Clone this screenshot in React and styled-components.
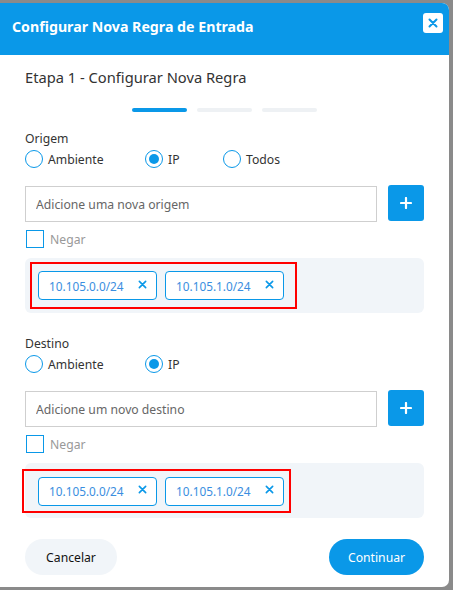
import React from 'react';
import styled, { createGlobalStyle } from 'styled-components';

const GlobalStyle = createGlobalStyle`
  html, body {
    margin: 0;
    padding: 0;
    background: #8a8a8a;
    font-family: 'Noto Sans', 'Open Sans', sans-serif;
  }
  * { box-sizing: border-box; }
`;

const Backdrop = styled.div`
  width: 453px;
  height: 590px;
  padding: 3px 4px 0 0;
  background: #8a8a8a;
  overflow: hidden;
`;

const Modal = styled.div`
  width: 449px;
  height: 584px;
  background: #fff;
  border-radius: 0 7px 7px 0;
  overflow: hidden;
  display: flex;
  flex-direction: column;
`;

const Header = styled.div`
  height: 52px;
  background: #0a98e8;
  display: flex;
  align-items: flex-start;
  justify-content: space-between;
  padding: 10px 6px 0 12px;
`;

const Title = styled.h1`
  margin: 0;
  color: #fff;
  font-size: 14.2px;
  line-height: 28px;
  font-weight: 700;
`;

const CloseButton = styled.button`
  width: 20px;
  height: 20px;
  border: none;
  border-radius: 3px;
  background: #fff;
  display: flex;
  align-items: center;
  justify-content: center;
  padding: 0;
`;

const Body = styled.div`
  padding: 12px 25px 0 25px;
  display: flex;
  flex-direction: column;
`;

const StepTitle = styled.h2`
  margin: 0;
  font-size: 14.7px;
  font-weight: 400;
  color: #333;
  line-height: 20px;
`;

const Steps = styled.div`
  display: flex;
  justify-content: center;
  gap: 10px;
  margin: 21px 0 18px;
`;

const StepBar = styled.div`
  width: 55px;
  height: 4px;
  border-radius: 2px;
  background: ${p => (p.$active ? '#0a98e8' : '#eef1f4')};
`;

const Section = styled.div`
  display: flex;
  flex-direction: column;
  margin-top: ${p => p.$gap}px;
`;

const Label = styled.div`
  font-size: 12.2px;
  color: #333;
  line-height: 17px;
`;

const RadioRow = styled.div`
  display: flex;
  align-items: center;
  margin-top: 2px;
  height: 20px;
`;

const RadioOption = styled.label`
  display: flex;
  align-items: center;
  gap: 5px;
  width: ${p => p.$width}px;
  font-size: 12.2px;
  color: #333;
`;

const RadioCircle = styled.span`
  width: 18px;
  height: 18px;
  border-radius: 50%;
  border: 1px solid #0a98e8;
  display: flex;
  align-items: center;
  justify-content: center;
  flex-shrink: 0;

  &::after {
    content: '';
    width: 10px;
    height: 10px;
    border-radius: 50%;
    background: ${p => (p.$checked ? '#0a98e8' : 'transparent')};
  }
`;

const InputRow = styled.div`
  display: flex;
  align-items: center;
  gap: 11px;
  margin-top: 17px;
`;

const TextInput = styled.input`
  flex: 1;
  height: 36px;
  border: 1px solid #cfcfcf;
  padding: 0 10px;
  font-family: inherit;
  font-size: 12.2px;
  color: #333;
  outline: none;

  &::placeholder {
    color: #666;
  }
`;

const AddButton = styled.button`
  width: 36px;
  height: 36px;
  border: none;
  border-radius: 3px;
  background: #0a98e8;
  display: flex;
  align-items: center;
  justify-content: center;
  padding: 0;
  margin-top: -2px;
`;

const CheckRow = styled.label`
  display: flex;
  align-items: center;
  gap: 6px;
  margin-top: 8px;
  margin-left: 1px;
  font-size: 12.2px;
  color: #999;
`;

const CheckBox = styled.span`
  width: 18px;
  height: 18px;
  border: 1px solid #0a98e8;
`;

const ChipArea = styled.div`
  margin-top: 10px;
  height: 55px;
  border-radius: 6px;
  background: #f1f5f9;
  display: flex;
  align-items: center;
`;

const Highlight = styled.div`
  border: 2px solid #f00;
  display: flex;
  align-items: center;
  gap: 8px;
  margin-left: ${p => p.$inset}px;
  padding: ${p => p.$padTop}px ${p => p.$padRight}px ${p => p.$padBottom}px ${p => p.$padLeft}px;
`;

const Chip = styled.div`
  width: 119px;
  height: 29px;
  border: 1px solid #0a98e8;
  border-radius: 4px;
  background: #fff;
  display: flex;
  align-items: center;
  justify-content: space-between;
  padding: 0 9px 0 10px;
  font-size: 11.8px;
  color: #3a8ee0;
`;

const ChipClose = styled.span`
  display: flex;
  align-items: center;
  margin-top: -3px;
`;

const Footer = styled.div`
  display: flex;
  justify-content: space-between;
  align-items: center;
  margin-top: 21px;
`;

const PillButton = styled.button`
  width: ${p => p.$width}px;
  height: 36px;
  border: none;
  border-radius: 18px;
  padding: 0;
  font-family: inherit;
  font-size: 12.2px;
  background: ${p => (p.$primary ? '#0a98e8' : '#f1f5f9')};
  color: ${p => (p.$primary ? '#fff' : '#111')};
`;

const Cross = ({ size = 10, stroke = 2 }) => (
  <svg width={size} height={size} viewBox="0 0 10 10">
    <path d="M1.5 1.5 L8.5 8.5 M8.5 1.5 L1.5 8.5" stroke="#0a98e8" strokeWidth={stroke} strokeLinecap="round" />
  </svg>
);

const Plus = () => (
  <svg width="12" height="12" viewBox="0 0 12 12">
    <path d="M6 1 V11 M1 6 H11" stroke="#fff" strokeWidth="2.2" strokeLinecap="round" />
  </svg>
);

const chips = ['10.105.0.0/24', '10.105.1.0/24'];

const RuleSection = ({ label, options, placeholder, gap, frame }) => (
  <Section $gap={gap}>
    <Label>{label}</Label>
    <RadioRow>
      {options.map(o => (
        <RadioOption key={o.name} $width={o.width}>
          <RadioCircle $checked={o.checked} />
          {o.name}
        </RadioOption>
      ))}
    </RadioRow>
    <InputRow>
      <TextInput placeholder={placeholder} />
      <AddButton>
        <Plus />
      </AddButton>
    </InputRow>
    <CheckRow>
      <CheckBox />
      Negar
    </CheckRow>
    <ChipArea>
      <Highlight {...frame}>
        {chips.map(c => (
          <Chip key={c}>
            {c}
            <ChipClose>
              <Cross size={9} stroke={1.8} />
            </ChipClose>
          </Chip>
        ))}
      </Highlight>
    </ChipArea>
  </Section>
);

export default function App() {
  return (
    <>
      <GlobalStyle />
      <Backdrop>
        <Modal>
          <Header>
            <Title>Configurar Nova Regra de Entrada</Title>
            <CloseButton>
              <Cross size={10} stroke={2} />
            </CloseButton>
          </Header>
          <Body>
            <StepTitle>Etapa 1 - Configurar Nova Regra</StepTitle>
            <Steps>
              <StepBar $active />
              <StepBar />
              <StepBar />
            </Steps>
            <RuleSection
              gap={0}
              label="Origem"
              placeholder="Adicione uma nova origem"
              options={[
                { name: 'Ambiente', width: 120 },
                { name: 'IP', width: 78, checked: true },
                { name: 'Todos', width: 80 },
              ]}
              frame={{ $inset: 5, $padLeft: 6, $padRight: 11, $padTop: 7, $padBottom: 7 }}
            />
            <RuleSection
              gap={22}
              label="Destino"
              placeholder="Adicione um novo destino"
              options={[
                { name: 'Ambiente', width: 120 },
                { name: 'IP', width: 78, checked: true },
              ]}
              frame={{ $inset: -3, $padLeft: 14, $padRight: 5, $padTop: 6, $padBottom: 5 }}
            />
            <Footer>
              <PillButton $width={92}>Cancelar</PillButton>
              <PillButton $primary $width={95}>Continuar</PillButton>
            </Footer>
          </Body>
        </Modal>
      </Backdrop>
    </>
  );
}
